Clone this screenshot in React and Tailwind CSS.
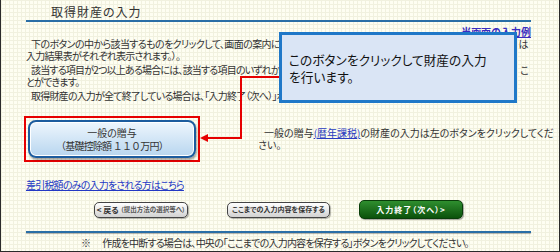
import React from 'react';

const jp = "[font-family:'Noto_Sans_CJK_JP','Noto_Sans',sans-serif] [font-feature-settings:'palt']";

export default function App() {
  return (
    <div className={"relative w-[560px] h-[252px] overflow-hidden border-l border-r border-b border-[#2a2a2a] bg-[#fefef2] bg-[linear-gradient(#f1f1df_1px,transparent_1px),linear-gradient(90deg,#f1f1df_1px,transparent_1px)] bg-[size:4px_4px] text-[#333] " + jp}>
      <div className="w-[530px] pl-[25px]">
        {/* title */}
        <div className="h-[20px] pt-[3px] pl-[25px] text-[12px] leading-[18px] tracking-[1px] text-[#333]">
          取得財産の入力
        </div>
        <div className="h-[2px] bg-[#2a6ea6]" />

        <div className="mt-[4px] text-right text-[10px] leading-[12px] font-bold text-[#3a2cc0] underline">
          当画面の入力例
        </div>

        {/* paragraphs */}
        <div className="text-[10px] leading-[12px] tracking-[-0.8px]">
          <div className="flex pr-[3px] tracking-[-0.6px]">
            <span className="flex-1 overflow-hidden whitespace-nowrap indent-[5px]">
              下のボタンの中から該当するものをクリックして、画面の案内に沿って入力してください（入力終了後の
            </span>
            <span className="relative z-10">は</span>
          </div>
          <div>入力結果表がそれぞれ表示されます。）。</div>
          <div className="mt-[2px] flex pr-[3px]">
            <span className="flex-1 overflow-hidden whitespace-nowrap indent-[5px]">
              該当する項目が2つ以上ある場合には、該当する項目のいずれかを選択して入力した後、続けて入力するこ
            </span>
            <span className="relative z-10">こ</span>
          </div>
          <div>とができます。</div>
          <div className="mt-[2px] whitespace-nowrap overflow-hidden indent-[5px]">
            取得財産の入力が全て終了している場合は、「入力終了（次へ）」ボタンをクリックしてください。
          </div>
        </div>

        {/* gift button row */}
        <div className="mt-[14px] flex items-center">
          <div className="ml-[-2px] w-[176px] h-[46px] border-2 border-[#e60000] p-[2px]">
            <div className="h-full rounded-[8px] border-2 border-[#1c5c9e] bg-gradient-to-b from-[#eef6fd] to-[#b8d6ef] shadow-[inset_0_0_0_1px_#ffffff,1px_2px_2px_rgba(0,0,0,0.35)] flex flex-col items-center justify-center text-[10px] leading-[13px] text-[#333]">
              <div>一般の贈与</div>
              <div className="[font-feature-settings:normal] tracking-[-0.8px]">（基礎控除額 １１０万円）</div>
            </div>
          </div>
          <div className="ml-[58px] w-[272px] text-[10px] leading-[12px]">
            <div className="whitespace-nowrap indent-[6px]">
              一般の贈与<span className="text-[#2a3cc0] underline">(暦年課税)</span>の財産の入力は左のボタンをクリックしてくだ
            </div>
            <div>さい。</div>
          </div>
        </div>

        <div className="mt-[17px] text-[10px] leading-[12px] tracking-[-0.8px] text-[#2338c4] underline">
          差引税額のみの入力をされる方はこちら
        </div>

        {/* action buttons */}
        <div className="mt-[9px] h-[19px] flex items-center pl-[68px]">
          <div className="w-[94px] h-[16px] rounded-[5px] border border-[#444] bg-gradient-to-b from-[#ffffff] to-[#d2d2d2] shadow-[1px_1px_1px_rgba(0,0,0,0.3)] flex items-center justify-center gap-[2px] whitespace-nowrap">
            <span className="text-[8px] font-bold text-[#333]">&lt; 戻る</span>
            <span className="text-[6.5px] font-bold text-[#555]">（提出方法の選択等へ）</span>
          </div>
          <div className="ml-[39px] w-[103px] h-[16px] rounded-[5px] border border-[#444] bg-gradient-to-b from-[#ffffff] to-[#d2d2d2] shadow-[1px_1px_1px_rgba(0,0,0,0.3)] flex items-center justify-center whitespace-nowrap text-[7px] font-bold text-[#333]">
            ここまでの入力内容を保存する
          </div>
          <div className="ml-[29px] w-[104px] h-[19px] rounded-[5px] border border-[#0a3d0a] bg-gradient-to-b from-[#2f8f2f] to-[#0b520b] shadow-[1px_1px_1px_rgba(0,0,0,0.35)] flex items-center justify-center whitespace-nowrap text-[8px] font-bold tracking-[1px] text-white">
            入力終了（次へ）&gt;
          </div>
        </div>

        <div className="mt-[12px] h-[2px] bg-[#2a6ea6] shadow-[0_1px_1px_rgba(0,0,0,0.3)]" />

        <div className="mt-[4px] pl-[55px] text-[10px] leading-[12px] tracking-[-0.8px] whitespace-nowrap">
          ※<span className="ml-[12px]">作成を中断する場合は、中央の「ここまでの入力内容を保存する」ボタンをクリックしてください。</span>
        </div>
      </div>

      {/* red connector */}
      <svg className="absolute left-0 top-0" width="560" height="252">
        <path d="M278 77 H240 V138 H205" fill="none" stroke="#e60000" strokeWidth="2" />
        <polygon points="199,138 207,134 207,142" fill="#e60000" />
      </svg>

      {/* callout */}
      <div className="absolute left-[278px] top-[32px] w-[238px] h-[71px] border-[3px] border-[#1f78c8] bg-[#dae5f5] pl-[7px] pt-[16px] text-[12.7px] leading-[17px] text-[#111] [font-family:'Noto_Sans_CJK_JP',sans-serif]">
        <div>このボタンをクリックして財産の入力</div>
        <div>を行います。</div>
      </div>
    </div>
  );
}
